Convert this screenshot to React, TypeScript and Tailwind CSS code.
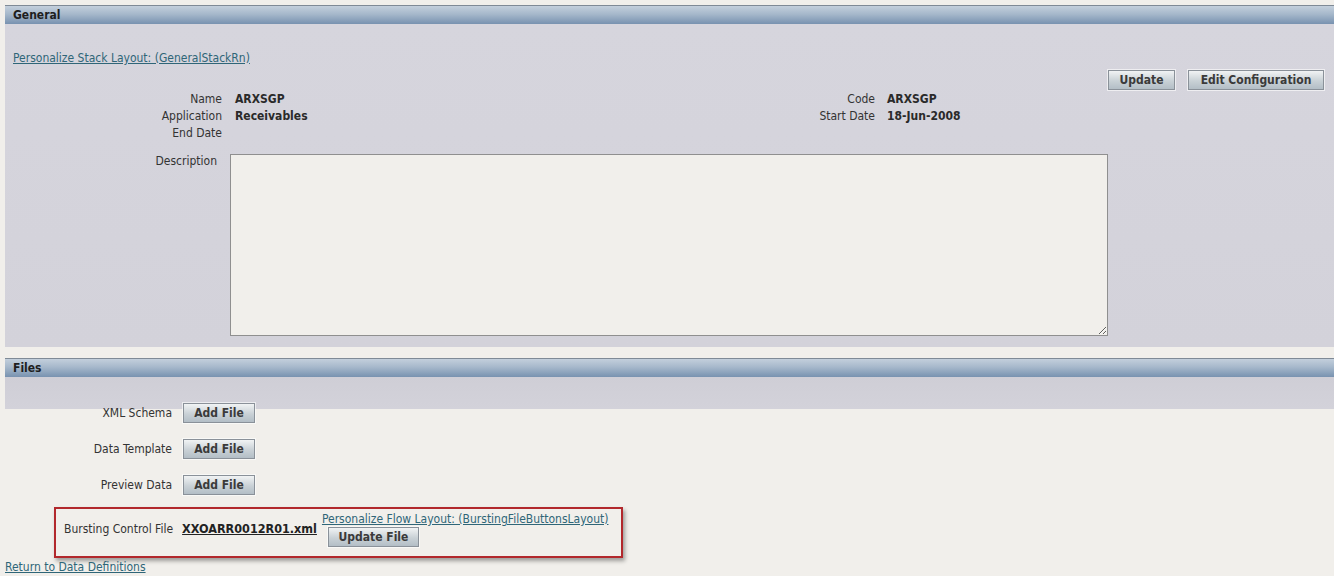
import React from "react";

const font = { fontFamily: '"DejaVu Sans Condensed", "DejaVu Sans", sans-serif' };

function OraButton({ label, className = "" }: { label: string; className?: string }) {
  return (
    <button
      type="button"
      className={`h-[20px] whitespace-nowrap border border-[#8a9199] bg-[linear-gradient(#f1f3f4,#c9d1d6_55%,#b3bec6)] px-0 text-[12px] leading-[18px] font-bold text-[#3a3a3a] shadow-[0_0_0_1px_rgba(255,255,255,0.6)] ${className}`}
    >
      {label}
    </button>
  );
}

function SectionHeader({ title }: { title: string }) {
  return (
    <div className="h-[19px] border-t border-[#7f8a96] bg-[linear-gradient(#c3cfdc,#a6b8cb_45%,#7892b0)] pl-[8px] text-[12px] leading-[18px] font-bold text-[#1e1e1e]">
      {title}
    </div>
  );
}

function InfoRow({ label, value }: { label: string; value?: string }) {
  return (
    <>
      <div className="text-right text-[12px] leading-[17px] text-[#333]">{label}</div>
      <div className="text-[12px] leading-[17px] font-bold text-[#2a2a2a]">{value ?? ""}</div>
    </>
  );
}

function OraLink({ children, className = "" }: { children: React.ReactNode; className?: string }) {
  return (
    <a href="#" className={`block w-fit text-[12px] leading-[16px] text-[#2f6678] underline ${className}`}>
      {children}
    </a>
  );
}

export default function App() {
  return (
    <div className="min-h-screen w-[1334px] bg-[#f1efeb] pt-[5px] text-[12px] leading-[16px]" style={font}>
      {/* General */}
      <div className="pl-[5px]">
        <SectionHeader title="General" />
        <div className="bg-[linear-gradient(#d6d5dd,#d3d2da)] pb-[11px] pt-[26px]">
          <OraLink className="ml-[8px]">Personalize Stack Layout: (GeneralStackRn)</OraLink>
          <div className="mt-[4px] flex justify-end gap-[13px] pr-[10px]">
            <OraButton label="Update" className="w-[67px]" />
            <OraButton label="Edit Configuration" className="w-[136px]" />
          </div>
          <div className="mt-[1px] flex">
            <div className="grid w-[640px] grid-cols-[217px_1fr] gap-x-[13px]">
              <InfoRow label="Name" value="ARXSGP" />
              <InfoRow label="Application" value="Receivables" />
              <InfoRow label="End Date" />
            </div>
            <div className="grid grid-cols-[230px_1fr] content-start gap-x-[12px]">
              <InfoRow label="Code" value="ARXSGP" />
              <InfoRow label="Start Date" value="18-Jun-2008" />
            </div>
          </div>
          <div className="mt-[12px] flex gap-[13px]">
            <div className="w-[212px] text-right text-[12px] leading-[14px] text-[#333]">Description</div>
            <textarea className="block h-[182px] w-[878px] border border-[#8f8f8f] bg-[#f1efeb] outline-none" />
          </div>
        </div>
      </div>

      {/* Files */}
      <div className="mt-[11px] pl-[5px]">
        <SectionHeader title="Files" />
        <div className="h-[32px] bg-[linear-gradient(#cfced6,#d3d2da)]" />
      </div>
      <div className="-mt-[6px] grid grid-cols-[172px_auto] items-center justify-start gap-x-[11px] gap-y-[16px]">
        <div className="text-right text-[12px] text-[#333]">XML Schema</div>
        <OraButton label="Add File" className="w-[72px]" />
        <div className="text-right text-[12px] text-[#333]">Data Template</div>
        <OraButton label="Add File" className="w-[72px]" />
        <div className="text-right text-[12px] text-[#333]">Preview Data</div>
        <OraButton label="Add File" className="w-[72px]" />
      </div>

      {/* Bursting control file */}
      <div className="ml-[54px] mt-[12px] w-[569px] border-2 border-[#b2282c] pb-[9px] pl-[8px] pt-[2px] shadow-[2px_3px_4px_rgba(0,0,0,0.35)]">
        <div className="flex items-center">
          <span className="text-[12px] text-[#333]">Bursting Control File</span>
          <a href="#" className="ml-[9px] text-[12.5px] font-bold text-[#222] underline">
            XXOARR0012R01.xml
          </a>
          <div className="ml-[5px] flex flex-col items-start">
            <OraLink>Personalize Flow Layout: (BurstingFileButtonsLayout)</OraLink>
            <OraButton label="Update File" className="ml-[6px] w-[91px]" />
          </div>
        </div>
      </div>
      <OraLink className="ml-[5px] mt-[1px]">Return to Data Definitions</OraLink>
    </div>
  );
}
